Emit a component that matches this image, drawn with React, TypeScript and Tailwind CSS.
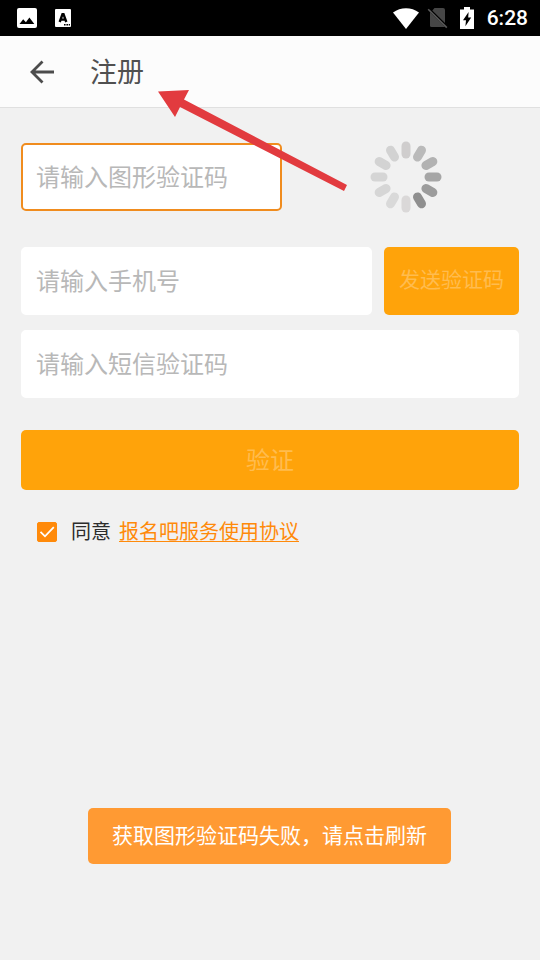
import React, { useState } from "react";

const fontStack = "font-['Roboto','Noto_Sans_CJK_SC',sans-serif]";

const fieldClass =
  "h-[68px] min-w-0 rounded-[5px] border-2 bg-white px-[13px] pt-0.5 text-2xl text-[#333333] outline-none placeholder:text-[#b8b8b8]";

const spokes = [
  "#cfcdcd",
  "#bababa",
  "#b2b2b2",
  "#a6a6a6",
  "#9c9c9c",
  "#8f8f8f",
  "#dad8d8",
  "#d9d9d9",
  "#d6d6d6",
  "#d5d5d5",
  "#d3d3d3",
  "#d2d2d2",
];

function StatusBar() {
  return (
    <div className="flex h-9 items-center justify-between bg-black pr-3 pl-[17px] text-white">
      <div className="flex items-center gap-[18px]">
        <svg viewBox="0 0 20 20" className="size-5" aria-hidden="true">
          <rect width="20" height="20" rx="2" fill="#fff" />
          <path d="M2.5 16 L6.2 11.2 L8.9 14.2 L12.4 9.6 L17.3 16 Z" fill="#000" />
        </svg>
        <svg viewBox="0 0 16 18" className="h-[18px] w-4" aria-hidden="true">
          <rect width="16" height="18" rx="1" fill="#fff" />
          <path
            d="M4.7 13 L7.5 5.2 H8.5 L11.3 13 M5.9 10.6 H10.1"
            fill="none"
            stroke="#000"
            strokeWidth="2.4"
          />
          <path d="M9 15h1.6v1.6H9z M11.4 15H13v1.6h-1.6z M13.7 15h1.3v1.6h-1.3z" fill="#000" />
        </svg>
      </div>
      <div className="flex items-center">
        <svg viewBox="0 0 26 21" className="mr-2 h-[21px] w-[26px]" aria-hidden="true">
          <path d="M0 4.5 C7.5 -1.2 18.5 -1.2 26 4.5 L13 21 Z" fill="#fff" />
        </svg>
        <svg viewBox="0 0 21 22" className="mr-3 h-[22px] w-[21px]" aria-hidden="true">
          <path d="M7.5 1 H16 a2 2 0 0 1 2 2 V16 L5.3 3.4 Z" fill="#464646" />
          <path d="M3 5.2 L18 20 H4.5 a1.5 1.5 0 0 1 -1.5 -1.5 Z" fill="#464646" />
          <path d="M1.2 2.2 L19.8 20.6" stroke="#5a5a5a" strokeWidth="1.6" />
        </svg>
        <svg viewBox="0 0 14 22" className="mr-[13px] h-[22px] w-3.5" aria-hidden="true">
          <path d="M4 0 H10 V2.5 H14 V22 H0 V2.5 H4 Z" fill="#fff" />
          <path d="M8.6 5 L3 13.3 H6 L5.4 19.2 L11.2 10.6 H8.2 Z" fill="#000" />
        </svg>
        <span className="text-[21px] leading-6 font-medium">6:28</span>
      </div>
    </div>
  );
}

function Spinner() {
  return (
    <svg viewBox="-36 -36 72 72" className="size-[72px]" role="img" aria-label="加载中">
      {spokes.map((color, i) => (
        <line
          key={i}
          y1="-31"
          y2="-23"
          stroke={color}
          strokeWidth="9"
          strokeLinecap="round"
          transform={`rotate(${i * 30})`}
        />
      ))}
    </svg>
  );
}

export default function App() {
  const [agreed, setAgreed] = useState(true);

  return (
    <div className={`relative min-h-screen bg-[#f1f1f1] ${fontStack}`}>
      <StatusBar />
      <header className="flex h-[72px] items-center border-b border-[#e0e0e0] bg-[#fcfcfc] pl-[30px]">
        <button type="button" aria-label="返回" className="mr-[35px]">
          <svg viewBox="0 0 25 24" className="h-6 w-[25px]" aria-hidden="true">
            <path
              d="M12.5 1.5 L2 12 L12.5 22.5 M2 12 H24"
              fill="none"
              stroke="#4c4c4c"
              strokeWidth="2.8"
            />
          </svg>
        </button>
        <h1 className="pt-0.5 text-[27px] leading-9 text-[#505050]">注册</h1>
      </header>

      <form className="flex flex-col px-[21px] pt-[35px]" onSubmit={(e) => e.preventDefault()}>
        <div className="flex h-[68px] items-center gap-[11px]">
          <input
            aria-label="图形验证码"
            placeholder="请输入图形验证码"
            className={`${fieldClass} w-[261px] border-[#f08c1e]`}
          />
          <div className="flex flex-1 justify-center">
            <Spinner />
          </div>
        </div>
        <div className="mt-9 flex gap-3">
          <input
            type="tel"
            aria-label="手机号"
            placeholder="请输入手机号"
            className={`${fieldClass} flex-1 border-white`}
          />
          <button
            type="button"
            className="w-[135px] rounded-[5px] bg-[#ffa30a] text-[21px] text-[#ffbc4f]"
          >
            发送验证码
          </button>
        </div>
        <input
          aria-label="短信验证码"
          placeholder="请输入短信验证码"
          className={`${fieldClass} mt-[15px] border-white`}
        />
        <button
          type="submit"
          className="mt-8 h-[60px] rounded-[5px] bg-[#ffa30a] pt-0.5 text-2xl text-[#ffbc4f]"
        >
          验证
        </button>
        <div className="mt-[26px] flex items-center px-4 text-xl leading-8">
          <label className="flex items-center gap-3.5 text-[#2c2c2c]">
            <span className="grid size-5 place-items-center">
              <input
                type="checkbox"
                checked={agreed}
                onChange={(e) => setAgreed(e.target.checked)}
                className="peer col-start-1 row-start-1 size-5 appearance-none rounded-xs border border-[#ff8a0a] bg-white checked:bg-[#ff8a0a]"
              />
              <svg
                viewBox="0 0 20 20"
                className="pointer-events-none invisible col-start-1 row-start-1 size-5 peer-checked:visible"
                aria-hidden="true"
              >
                <path d="M3.5 9.8 L8 14.3 L16.8 5.2" fill="none" stroke="#fff" strokeWidth="1.8" />
              </svg>
            </span>
            同意
          </label>
          <a
            href="#agreement"
            className="ml-2 text-[#ff8a0a] underline decoration-1 underline-offset-2"
          >
            报名吧服务使用协议
          </a>
        </div>
      </form>

      <svg
        viewBox="0 0 190 102"
        className="pointer-events-none absolute top-[90px] left-[157px] h-[102px] w-[190px]"
        aria-hidden="true"
      >
        <path d="M1 1.5 L32 0 L27 9.5 L190 95 L187 101 L23 17 L18 27 Z" fill="#e23b3f" />
      </svg>

      <div className="pointer-events-none fixed inset-x-0 bottom-24 flex justify-center">
        <div
          role="status"
          className="mr-px rounded-[5px] bg-[#ff9a33] px-6 py-3 text-[21px] leading-8 text-white"
        >
          获取图形验证码失败，请点击刷新
        </div>
      </div>
    </div>
  );
}
